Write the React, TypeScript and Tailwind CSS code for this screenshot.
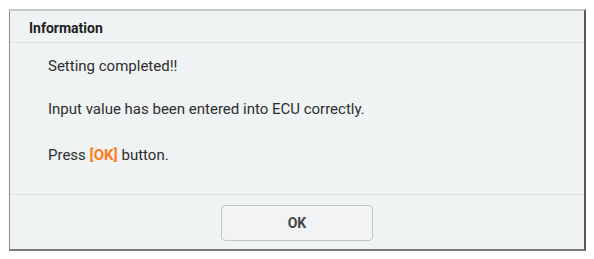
export default function App() {
  return (
    <div className="w-[594px] h-[259px] bg-white pt-[9px] pl-[9px]" style={{ fontFamily: "Roboto, 'Noto Sans', sans-serif" }}>
      <div className="w-[577px] h-[242px] flex flex-col bg-[#eff3f4] border-t-2 border-t-[#c9c9c9] border-l border-l-[#8a8a8a] border-r-2 border-r-[#585858] border-b-2 border-b-[#7c7c7c]">
        <div className="h-[32px] flex items-center pl-[19px] pt-[3px] border-b border-[#dcdfe1] text-[14px] font-bold text-[#222]">
          Information
        </div>
        <div className="flex-1 flex flex-col pl-[38px] pt-[13px] text-[15px] text-[#2e2e2e] gap-[24px] leading-[20px]">
          <div>Setting completed!!</div>
          <div className="mt-[-1px]">Input value has been entered into ECU correctly.</div>
          <div className="mt-[2px]">
            Press <span className="font-bold text-[#ff7b1c]">[OK]</span> button.
          </div>
        </div>
        <div className="h-[55px] border-t border-[#dcdfe1] flex justify-center pt-[10px]">
          <button className="w-[152px] h-[36px] rounded-[4px] border border-[#c2c4c6] bg-[#f1f3f4] text-[14px] font-bold text-[#444]">
            OK
          </button>
        </div>
      </div>
    </div>
  );
}
